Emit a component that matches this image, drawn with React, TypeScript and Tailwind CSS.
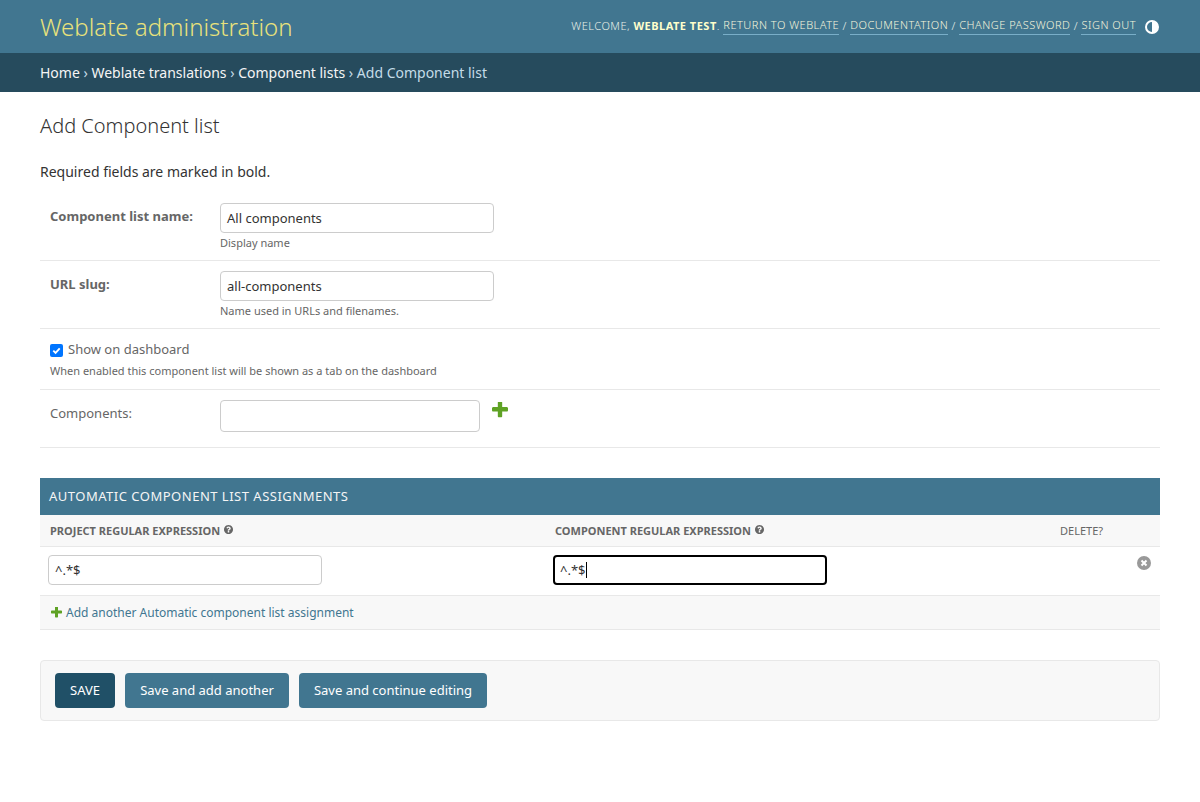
const Plus = ({ className }: { className: string }) => (
  <svg viewBox="192 192 1408 1408" className={className} fill="#5fa225">
    <path d="M1600 736v192q0 40-28 68t-68 28h-416v416q0 40-28 68t-68 28h-192q-40 0-68-28t-28-68v-416h-416q-40 0-68-28t-28-68v-192q0-40 28-68t68-28h416v-416q0-40 28-68t68-28h192q40 0 68 28t28 68v416h416q40 0 68 28t28 68z" />
  </svg>
);

const Help = () => (
  <svg viewBox="128 128 1536 1536" className="inline-block w-[9px] h-[9px] ml-[4px] align-[1px]" fill="#666666">
    <path d="M1024 1376v-192q0-14-9-23t-23-9h-192q-14 0-23 9t-9 23v192q0 14 9 23t23 9h192q14 0 23-9t9-23zm256-672q0-88-55.500-163t-138.500-116-170-41q-243 0-371 213-15 24 8 42l132 100q7 6 19 6 16 0 25-12 53-68 86-92 34-24 86-24 48 0 85.500 26t37.500 59q0 38-20 61t-68 45q-63 28-115.500 86.500t-52.500 125.500v36q0 14 9 23t23 9h192q14 0 23-9t9-23q0-19 21.500-49.500t54.500-49.500q32-18 49-28.500t46-35 44.500-48 28-60.500 12.500-81zm384 192q0 209-103 385.500t-279.500 279.500-385.500 103-385.500-103-279.500-279.500-103-385.500 103-385.500 279.500-279.500 385.500-103 385.500 103 279.500 279.500 103 385.500z" />
  </svg>
);

const TopLink = ({ children }: { children: string }) => (
  <a className="border-b border-[#79aec8] tracking-[0.5px] text-[#f5f5dc]">{children}</a>
);

const Sep = () => <span className="whitespace-pre tracking-[0.5px]"> / </span>;

const Field = ({ label, value, help }: { label: string; value: string; help: string }) => (
  <div className="flex px-[10px] pt-[10px] pb-[10px] border-b border-[#e8e8e8] h-[68px]">
    <label className="w-[170px] font-bold text-[13px] text-[#666666] pt-[3px] leading-[20px]">{label}</label>
    <div>
      <div className="w-[274px] h-[30px] border border-[#cccccc] rounded-[4px] px-[6px] text-[13px] leading-[28px] text-[#333333]">{value}</div>
      <div className="text-[11px] text-[#666666] leading-[16px] mt-[2px]">{help}</div>
    </div>
  </div>
);

export default function App() {
  return (
    <div className="min-h-[802px] bg-white text-[14px] text-[#333333]" style={{ fontFamily: '"Noto Sans", sans-serif' }}>
      <header className="h-[53px] bg-[#417690] px-[40px] flex items-center justify-between">
        <h1 className="text-[24px] font-light text-[#e9e27b] leading-[30px]">Weblate administration</h1>
        <div className="flex items-center text-[11px] text-[#e8f0e8] font-light -mt-[1px]">
          <span className="tracking-[0.5px] whitespace-pre">WELCOME, <strong className="font-bold text-[#ffffcc]">WEBLATE TEST</strong>. </span>
          <TopLink>RETURN TO WEBLATE</TopLink>
          <Sep />
          <TopLink>DOCUMENTATION</TopLink>
          <Sep />
          <TopLink>CHANGE PASSWORD</TopLink>
          <Sep />
          <TopLink>SIGN OUT</TopLink>
          <svg viewBox="0 0 14 14" className="w-[14px] h-[14px] ml-[9px] mr-[1px] mt-[1px]">
            <circle cx="7" cy="7" r="6" fill="#417690" stroke="#ffffff" strokeWidth="2" />
            <path d="M7 1a6 6 0 0 1 0 12z" fill="#ffffff" />
          </svg>
        </div>
      </header>

      <nav className="h-[39px] bg-[#264b5d] px-[40px] flex items-center text-[14px] text-[#c4dce8] whitespace-pre">
        <a className="text-[#f5f5f5]">Home</a> › <a className="text-[#f5f5f5]">Weblate translations</a> › <a className="text-[#f5f5f5]">Component lists</a> › Add Component list
      </nav>

      <main className="px-[40px] pt-[20px]">
        <h1 className="text-[20px] font-light leading-[28px] text-[#333333]">Add Component list</h1>
        <p className="mt-[20px] mb-[11px] leading-[20px] text-[14px] pt-[2px]">Required fields are marked in bold.</p>

        <Field label="Component list name:" value="All components" help="Display name" />
        <Field label="URL slug:" value="all-components" help="Name used in URLs and filenames." />

        <div className="h-[61px] px-[10px] pt-[11px] border-b border-[#e8e8e8]">
          <div className="flex items-center h-[20px] text-[13px] text-[#666666]">
            <span className="w-[13px] h-[13px] rounded-[2px] bg-[#0075ff] flex items-center justify-center mr-[5px]">
              <svg viewBox="0 0 12 12" className="w-[11px] h-[11px]" fill="none" stroke="#ffffff" strokeWidth="2">
                <path d="M2.500 6.200l2.500 2.500 4.500-5" />
              </svg>
            </span>
            Show on dashboard
          </div>
          <div className="text-[11px] text-[#666666] leading-[16px] mt-[3px]">When enabled this component list will be shown as a tab on the dashboard</div>
        </div>

        <div className="h-[58px] flex px-[10px] pt-[10px] border-b border-[#e8e8e8]">
          <label className="w-[170px] text-[13px] text-[#666666] leading-[20px] pt-[3px]">Components:</label>
          <div className="w-[260px] h-[32px] border border-[#cccccc] rounded-[4px]" />
          <Plus className="w-[16px] h-[16px] ml-[12px] mt-[2px]" />
        </div>

        <section className="mt-[30px]">
          <h2 className="h-[37px] bg-[#417690] text-[#f5f5f5] text-[13px] font-normal tracking-[0.5px] px-[9px] flex items-center">AUTOMATIC COMPONENT LIST ASSIGNMENTS</h2>
          <div className="h-[32px] bg-[#f8f8f8] border-b border-[#e8e8e8] flex items-center pt-[1px] text-[11px] text-[#666666]">
            <div className="w-[505px] pl-[10px] font-bold">PROJECT REGULAR EXPRESSION<Help /></div>
            <div className="w-[505px] pl-[10px] font-bold">COMPONENT REGULAR EXPRESSION<Help /></div>
            <div className="pl-[10px]">DELETE?</div>
          </div>
          <div className="h-[49px] border-b border-[#e8e8e8] flex pt-[8px] relative">
            <div className="w-[505px] pl-[8px]">
              <div className="w-[274px] h-[30px] border border-[#cccccc] rounded-[4px] px-[6px] text-[13px] leading-[28px]">^.*$</div>
            </div>
            <div className="w-[505px] pl-[8px]">
              <div className="w-[274px] h-[30px] border-2 border-black rounded-[4px] px-[5px] text-[13px] leading-[26px] flex items-center">
                ^.*$<span className="w-px h-[16px] bg-black" />
              </div>
            </div>
            <svg viewBox="0 0 14 14" className="absolute right-[9px] top-[9px] w-[14px] h-[14px]">
              <circle cx="7" cy="7" r="7" fill="#999999" />
              <path d="M4.500 4.500l5 5M9.500 4.500l-5 5" stroke="#ffffff" strokeWidth="2" />
            </svg>
          </div>
          <div className="h-[34px] bg-[#f8f8f8] border-b border-[#e8e8e8] flex items-center pl-[11px] text-[12px] text-[#417690]">
            <Plus className="w-[11px] h-[11px] mr-[4px]" />
            Add another Automatic component list assignment
          </div>
        </section>

        <div className="mt-[30px] h-[61px] bg-[#f8f8f8] border border-[#e8e8e8] rounded-[4px] flex items-center gap-[10px] px-[14px] text-[13px] text-white">
          <div className="h-[35px] w-[60px] bg-[#205067] rounded-[4px] flex items-center justify-center">SAVE</div>
          <div className="h-[35px] w-[164px] bg-[#417690] rounded-[4px] flex items-center justify-center">Save and add another</div>
          <div className="h-[35px] w-[188px] bg-[#417690] rounded-[4px] flex items-center justify-center">Save and continue editing</div>
        </div>
      </main>
    </div>
  );
}
